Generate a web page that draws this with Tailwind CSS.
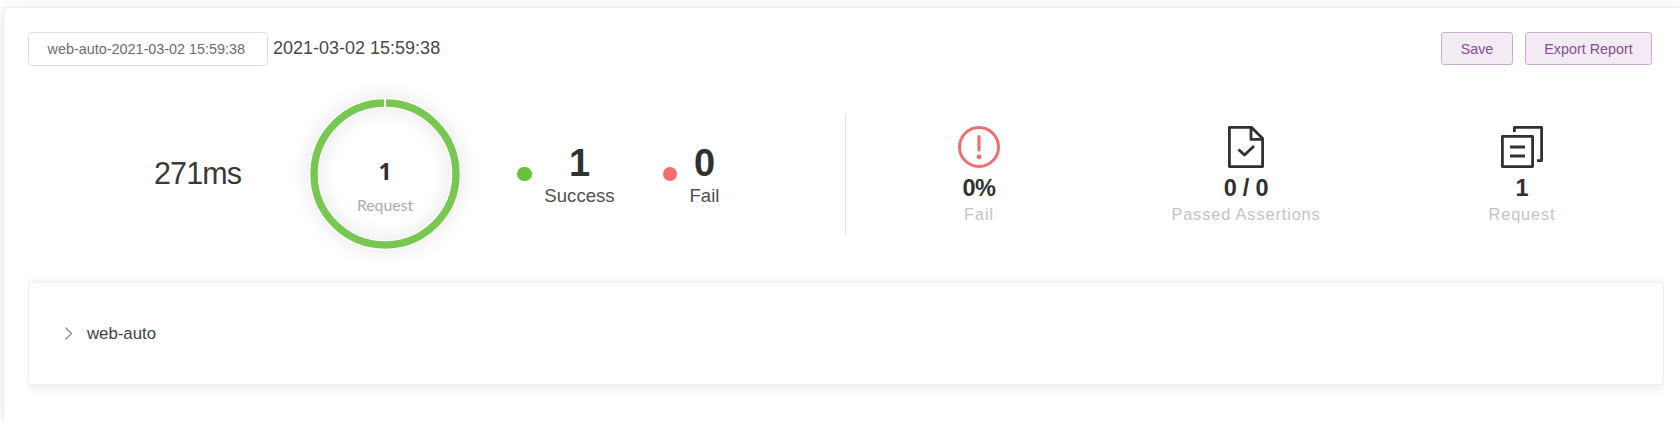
<!DOCTYPE html>
<html lang="en">
<head>
<meta charset="utf-8">
<title>Test Report</title>
<script src="https://cdn.jsdelivr.net/npm/@tailwindcss/browser@4"></script>
</head>
<body class="h-[421px] overflow-hidden bg-white pl-[3px] pt-[7px] font-['Liberation_Sans',Arial,sans-serif] text-[#303133]">
<main class="h-[414px] w-[1690px] rounded-t border border-b-0 border-[#EBEEF5] bg-white pl-6 pt-6 shadow-[0_2px_14px_rgba(0,0,0,0.1)]">
  <header class="flex h-[34px] w-[1624px] items-start">
    <div class="h-[34px] w-60 rounded border border-[#DCDFE6] pl-[18.5px] text-[14.4px] leading-[33px] whitespace-nowrap text-[#6A6C70]">web-auto-2021-03-02 15:59:38</div>
    <span class="ml-[5px] text-[18px] leading-8 text-[#484848]">2021-03-02 15:59:38</span>
    <div class="ml-auto flex gap-3 text-[14.35px] leading-[32px] text-[#874D95]">
      <button class="h-[33px] w-[72px] rounded-[3px] border border-[#C9AFCF] bg-[#F2EBF3]">Save</button>
      <button class="h-[33px] w-[127px] rounded-[3px] border border-[#C9AFCF] bg-[#F2EBF3]">Export Report</button>
    </div>
  </header>

  <section class="mt-[33px] flex h-[150px] w-[1636px] items-start *:shrink-0">
    <div class="mt-[52px] w-[282px] pl-[126px] text-[30.5px] leading-[44px] tracking-[-0.9px] text-[#38393B]">271ms</div>
    <div class="relative h-[150px] w-[150px]">
      <svg class="absolute inset-0 overflow-visible" width="150" height="150" viewBox="0 0 150 150">
        <circle cx="75" cy="75" r="71" fill="none" stroke="#fff" stroke-width="10" class="drop-shadow-[0_0_9px_rgba(0,0,0,0.13)]"/>
        <circle cx="75" cy="75" r="71" fill="none" stroke="#78C750" stroke-width="7.4"/>
        <path d="M75 0V9" stroke="#fff" stroke-width="2"/>
      </svg>
      <div class="relative flex flex-col items-center pt-[58px] font-['Noto_Sans',sans-serif]">
        <span class="text-[23px] leading-7 font-bold">1</span>
        <span class="mt-2 font-['Lato',sans-serif] text-[15.8px] leading-6 text-[#AAAAAA]">Request</span>
      </div>
    </div>
    <div class="mt-[68px] ml-[57px] h-[14px] w-[15px] rounded-full bg-[#67C23A]"></div>
    <div class="mt-[42px] ml-3 flex w-[71px] flex-col items-center">
      <span class="text-[38px] leading-[44px] font-bold">1</span>
      <span class="text-[18.6px] leading-[22px] text-[#505050]">Success</span>
    </div>
    <div class="mt-[68px] ml-[48px] size-[14px] rounded-full bg-[#F56C6C]"></div>
    <div class="mt-[42px] ml-3 flex w-[31px] flex-col items-center">
      <span class="text-[38px] leading-[44px] font-bold">0</span>
      <span class="text-[18.6px] leading-[22px] text-[#505050]">Fail</span>
    </div>
    <div class="mt-[15px] ml-[125px] h-[120px] w-px bg-[#DCDFE6]"></div>
    <div class="mt-[27px] flex">
      <div class="flex w-[266px] flex-col items-center">
        <svg width="42" height="42" viewBox="0 0 42 42" fill="none" stroke="#F56C6C" stroke-width="3"><circle cx="21" cy="21" r="19.5"/><path d="M21 10.5v13.5" stroke-linecap="round" stroke-width="3.2"/><circle cx="21" cy="31" r="2.4" fill="#F56C6C" stroke="none"/></svg>
        <b class="mt-[7px] text-[23.5px] leading-[26px] tracking-[-0.4px]">0%</b>
        <span class="mt-0.5 text-[16.3px] leading-[22px] tracking-[0.9px] text-[#C3C3C3]">Fail</span>
      </div>
      <div class="flex w-[268px] flex-col items-center">
        <svg width="36" height="42" viewBox="0 0 36 42" fill="none" stroke="#303133" stroke-width="2.8" stroke-linejoin="round"><path d="M1.4 1.4h22.2L34.6 12.4v28.2H1.4zM23 1.4v12h11.6M10.5 23.5l6 5.5 9.5-9"/></svg>
        <b class="mt-[7px] text-[23.5px] leading-[26px] tracking-[-0.2px]">0 / 0</b>
        <span class="mt-0.5 text-[16.3px] leading-[22px] tracking-[0.9px] text-[#C3C3C3]">Passed Assertions</span>
      </div>
      <div class="flex w-[284px] flex-col items-center">
        <svg width="42" height="42" viewBox="0 0 42 42" fill="none" stroke="#303133" stroke-width="2.8" stroke-linejoin="round"><path d="M1.4 10.4h30.2v30.2H1.4zM9 21h15M9 30h15M13.4 6V1.4h27.2v33.2H36"/></svg>
        <b class="mt-[7px] text-[23.5px] leading-[26px]">1</b>
        <span class="mt-0.5 text-[16.3px] leading-[22px] tracking-[0.9px] text-[#C3C3C3]">Request</span>
      </div>
    </div>
  </section>

  <div class="mt-[13px] h-[142px] w-[1636px] overflow-hidden pt-5">
    <div class="flex h-[103px] items-center gap-[15px] rounded border border-[#EBEEF5] bg-white pl-9 shadow-[0_2px_14px_rgba(0,0,0,0.1)]">
      <svg width="7" height="13" viewBox="0 0 7 13" fill="none" stroke="#808080" stroke-width="1.2"><path d="M.5.5l6 6-6 6"/></svg>
      <span class="text-[16.8px] leading-6 text-[#404143]">web-auto</span>
    </div>
  </div>
</main>
</body>
</html>
